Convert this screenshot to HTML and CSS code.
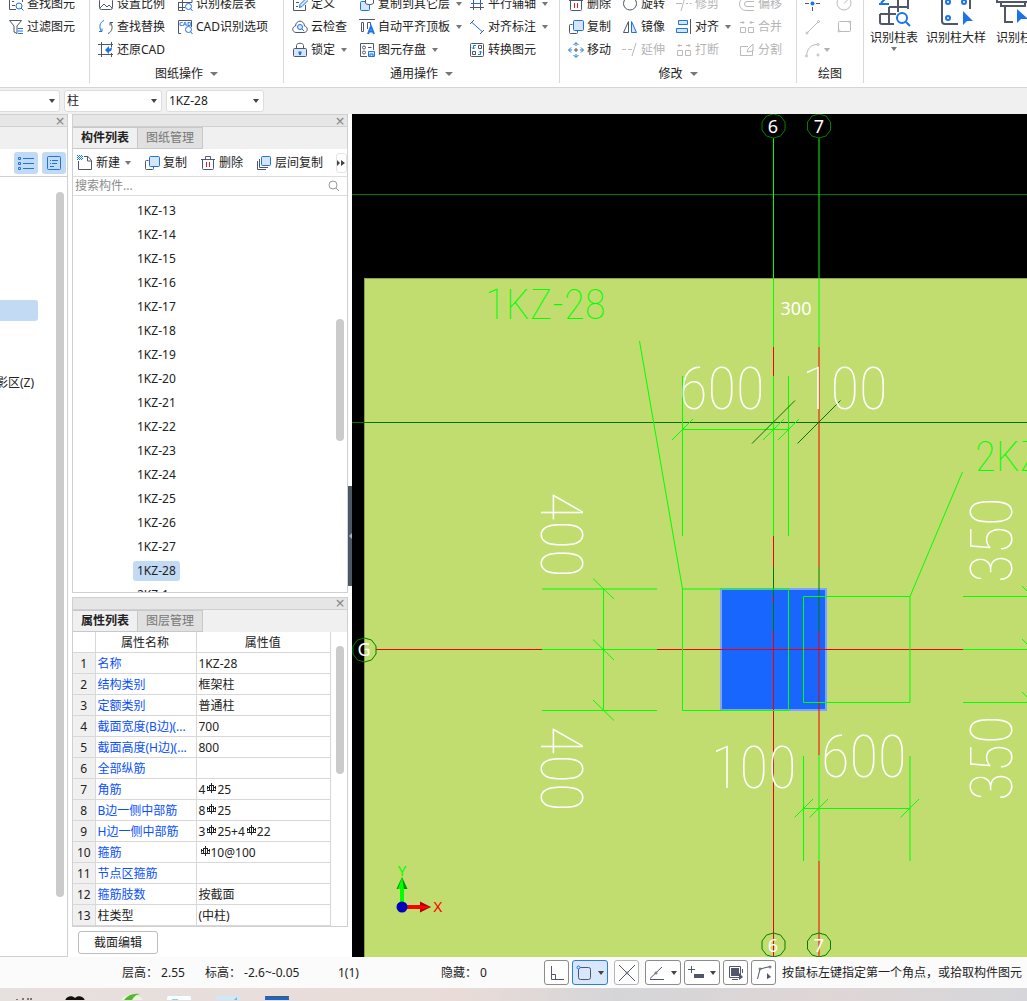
FILE: index.html
```html
<!DOCTYPE html>
<html lang="zh-CN">
  <head>
    <meta charset="UTF-8" />
    <meta name="viewport" content="width=device-width, initial-scale=1.0" />
    <title>柱 1KZ-28</title>
    <link rel="stylesheet" href="styles.css">
  </head>
  <body>
    <svg class="defs" aria-hidden="true">
      <symbol id="i-copy" viewBox="0 0 16 16"><path class="d" d="M4.500 5.500h-2a1 1 0 0 0-1 1v7a1 1 0 0 0 1 1h6a1 1 0 0 0 1-1v-2"/><rect class="b f" x="5.500" y="1.500" width="10" height="10" rx="1"/></symbol>
      <symbol id="i-trash" viewBox="0 0 16 16"><path class="d" d="M1 4.500h14M5.500 4V1.500h5V4M2.500 4.500v9a1 1 0 0 0 1 1h9a1 1 0 0 0 1-1v-9"/><path class="r" d="M6.500 7v5M9.500 7v5"/></symbol>
      <symbol id="i-find" viewBox="0 0 16 16"><path class="d" d="M14.500 6V1.500h-13v12H8M4 5.500h2M4 9.500h3"/><circle class="b" cx="11" cy="10" r="3"/><path class="b" d="M13 12l2.500 2.500"/></symbol>
      <symbol id="i-bar" viewBox="0 0 10 10"><path class="k" d="M5.500 0v10M3.500 2v6M7.500 2v6M1 7.500h9M3 2.500h5M1.500 3v3.500M3 4.500H1.500M9.500 3v3.500M8 4.500h1.500"/></symbol>
    </svg>

    <header class="ribbon">
      <section class="group group-find">
        <div class="cells">
          <button class="cmd"><svg class="ico"><use href="#i-find"/></svg>查找图元</button>
          <button class="cmd"><svg class="ico" viewBox="0 0 16 16"><path class="d" d="M1.500 1.500h12L9 7v7.500L6 13V7z"/><path class="b" d="M10 9.500h5M10 12h5M10 14.500h5"/></svg>过滤图元</button>
        </div>
      </section>

      <section class="group group-sheet">
        <div class="cells">
          <button class="cmd"><svg class="ico" viewBox="0 0 16 16"><rect class="d" x="1.500" y="2.500" width="13" height="11" rx="2"/><path class="d" d="M2 12l4-4 3 3 2-2 3 3"/></svg>设置比例</button>
          <button class="cmd"><svg class="ico" viewBox="0 0 16 16"><path class="d" d="M1 1.500h14v5M1 6.500h14M1 11.500h7M5.500 1v14M1.500 6v8.500H8"/><circle class="b" cx="11.500" cy="10.500" r="3"/><path class="b" d="M13.500 12.500l2 2.500"/></svg>识别楼层表</button>
          <button class="cmd"><svg class="ico" viewBox="0 0 16 16"><path class="b" d="M6 1.500C2 3 .5 8 3.500 12.500M1 12.500h3v-3"/><path class="d" d="M10 14.500c4-1.500 5.500-6.500 2.500-11M15 3.500h-3v3"/></svg>查找替换</button>
          <button class="cmd"><svg class="ico" viewBox="0 0 16 16"><path class="d" d="M4 14.500H1.500v-13h13V8"/><text class="cad-mark" x="2" y="7">CAD</text><circle class="b" cx="11.500" cy="10.500" r="3"/><path class="b" d="M13.500 12.500l2 2.500"/></svg>CAD识别选项</button>
          <button class="cmd"><svg class="ico" viewBox="0 0 16 16"><path class="d" d="M0 2.500h15M0 12.500h15M3.500 0v15M13.500 0v5M13.500 11v4"/><path class="bf" d="M7 8l4-4v2.500c2 0 2-.5 3-2 0 4-1 5-3 5V12z"/></svg>还原CAD</button>
        </div>
        <button class="caption">图纸操作<i class="tri"></i></button>
      </section>

      <section class="group group-common">
        <div class="cells">
          <button class="cmd"><svg class="ico" viewBox="0 0 16 16"><path class="d" d="M11 2.500H1.500v12h12V9M4 6.500h3M4 10.500h2"/><path class="b f" d="M7.500 11.500l.5-3 6-6 2 2-6 6z"/></svg>定义</button>
          <button class="cmd"><svg class="ico" viewBox="0 0 16 16"><rect class="b f" x="1.500" y="5.500" width="9" height="9" rx="1"/><path class="d w" d="M6.500 1v6c0 2 8 2 8 0V1"/></svg>复制到其它层<i class="tri"></i></button>
          <button class="cmd"><svg class="ico" viewBox="0 0 16 16"><path class="d" d="M1 3.500h14M1 11.500h14M4.500 1v13M11.500 1v13"/><path class="b" d="M2 7.500h12"/></svg>平行辅轴<i class="tri"></i></button>
          <button class="cmd"><svg class="ico" viewBox="0 0 16 16"><path class="d" d="M4 13.500C-.5 13 0 7.500 3.500 7 4 .5 12 .5 12.500 7c3.500.5 4 6-.5 6.500z"/><circle class="b f" cx="8" cy="8" r="2.500"/><path class="b" d="M10 10l2 2"/></svg>云检查</button>
          <button class="cmd"><svg class="ico" viewBox="0 0 16 16"><path class="d" d="M0 .5h16M2.500 3.500h2v9h-2zM8.500 10V3.500h3v3"/><path class="b b2" d="M9 15l3-7.500 3 7.500M10 12.500h4"/></svg>自动平齐顶板<i class="tri"></i></button>
          <button class="cmd"><svg class="ico" viewBox="0 0 16 16"><path class="b" d="M3 3.500l10 9"/><path class="d" d="M1 5l4-4M11 15l4-4"/></svg>对齐标注<i class="tri"></i></button>
          <button class="cmd"><svg class="ico" viewBox="0 0 16 16"><path class="d" d="M4.500 6V3.500c0-3 7-3 7 0V6"/><rect class="d f" x="1.500" y="6.500" width="13" height="8" rx="1"/><path class="b b2" d="M8 13V9.500M6.500 10.500h3"/></svg>锁定<i class="tri"></i></button>
          <button class="cmd"><svg class="ico" viewBox="0 0 16 16"><path class="d" d="M8 14.500H1.500v-13h13V8M9 5.500h3.500"/><circle class="d" cx="5" cy="5.500" r="1.500"/><circle class="d" cx="5" cy="10.500" r="1.500"/><path class="b f" d="M9.500 9.500h6v5h-6zM11 14v-2h3v2"/></svg>图元存盘<i class="tri"></i></button>
          <button class="cmd"><svg class="ico" viewBox="0 0 16 16"><rect class="d" x="1.500" y="1.500" width="13" height="13" rx="1"/><path class="d" d="M9.500 3.500h3v3h-3zM3.500 9.500h3v3h-3z"/><path class="b" d="M7 3.500H4.500V7M3 5.500L4.500 7 6 5.500M9 12.500h2.500V9M10 10.500L11.500 9l1.500 1.500"/></svg>转换图元</button>
        </div>
        <button class="caption">通用操作<i class="tri"></i></button>
      </section>

      <section class="group group-edit">
        <div class="cells">
          <button class="cmd"><svg class="ico"><use href="#i-trash"/></svg>删除</button>
          <button class="cmd"><svg class="ico" viewBox="0 0 16 16"><circle class="d" cx="8" cy="7.500" r="6.500"/></svg>旋转</button>
          <button class="cmd" disabled><svg class="ico" viewBox="0 0 16 16"><path class="d" d="M0 7.500h6M10 7.500h2M13.500 7.500h2M9 1L5 15"/></svg>修剪</button>
          <button class="cmd" disabled><svg class="ico" viewBox="0 0 16 16"><path class="d" d="M15 1.500H7a6 6 0 0 0 0 13h8M15 5.500H8a2.500 2.500 0 0 0 0 5h7"/></svg>偏移</button>
          <button class="cmd"><svg class="ico"><use href="#i-copy"/></svg>复制</button>
          <button class="cmd"><svg class="ico" viewBox="0 0 16 16"><path class="d" d="M6.500 2.500v11h-5z"/><path class="b f" d="M9.500 2.500v11h5z"/></svg>镜像</button>
          <button class="cmd"><svg class="ico" viewBox="0 0 16 16"><path class="b f" d="M2.500 1.500h9v4h-9zM.5 9.500h11v4H.5z"/><path class="d" d="M14.500 0v15"/></svg>对齐<i class="tri"></i></button>
          <button class="cmd" disabled><svg class="ico" viewBox="0 0 16 16"><path class="d" d="M1.500 8.500h5v5h-5zM9.500 8.500h5v5h-5zM1 3.500h4M3.500 2L5 3.500 3.500 5M15 3.500h-4M12.500 2L11 3.500 12.500 5"/></svg>合并</button>
          <button class="cmd"><svg class="ico" viewBox="0 0 16 16"><path class="b" d="M5.500 3L8 .5 10.500 3M5.500 13L8 15.500l2.500-2.500M3 5.500L.5 8 3 10.500M13 5.500L15.500 8 13 10.500M8 1v3M8 12v3M1 8h3M12 8h3"/><path class="d" d="M6 8h4M8 6v4"/></svg>移动</button>
          <button class="cmd" disabled><svg class="ico" viewBox="0 0 16 16"><path class="d" d="M0 7.500h4M6 7.500h4M14 1l-4 13"/></svg>延伸</button>
          <button class="cmd" disabled><svg class="ico" viewBox="0 0 16 16"><path class="d" d="M1.500 8.500h5v5h-5zM9.500 8.500h5v5h-5zM2 3.500h4M3.500 2L2 3.500 3.500 5M10 3.500h4M12.500 2L14 3.500 12.500 5"/></svg>打断</button>
          <button class="cmd" disabled><svg class="ico" viewBox="0 0 16 16"><path class="d" d="M9 4.500H1.500v9h12V8M8 10l1-3 5-5v7z"/></svg>分割</button>
        </div>
        <button class="caption">修改<i class="tri"></i></button>
      </section>

      <section class="group group-draw">
        <div class="cells">
          <button class="cmd" aria-label="点"><svg class="ico" viewBox="0 0 16 16"><circle class="bf" cx="7.500" cy="7.500" r="2"/><path class="d" d="M0 7.500h4M11 7.500h4M7.500 11v4M7.500 0v4"/></svg></button>
          <button class="cmd" disabled aria-label="圆"><svg class="ico" viewBox="0 0 16 16"><circle class="d" cx="8" cy="7" r="7"/><path class="d" d="M8 7.500l4-4"/></svg></button>
          <button class="cmd" disabled aria-label="直线"><svg class="ico" viewBox="0 0 16 16"><path class="d" d="M2 14L13 3"/><circle class="d w" cx="2" cy="14" r="1"/><circle class="d w" cx="13.500" cy="2.500" r="1"/></svg></button>
          <button class="cmd" disabled aria-label="矩形"><svg class="ico" viewBox="0 0 16 16"><rect class="d" x="2.500" y="2.500" width="12" height="10" rx="1"/><circle class="d w" cx="3" cy="12" r="1"/><circle class="d w" cx="14" cy="3" r="1"/></svg></button>
          <button class="cmd" disabled aria-label="弧"><svg class="ico" viewBox="0 0 16 16"><path class="d" d="M1.500 14C2 7 6 2.500 12 2.500"/><circle class="d w" cx="1.500" cy="14" r="1"/><circle class="d w" cx="13" cy="2.500" r="1"/><circle class="d w" cx="13" cy="13" r="1"/></svg><i class="tri"></i></button>
        </div>
        <span class="caption">绘图</span>
      </section>

      <section class="group group-detect">
        <button class="big"><svg class="ico-big" viewBox="0 0 32 32"><path class="d b2" d="M2 20v8a2 2 0 0 0 2 2h12M2 20h16M11 13v17M20 4v14M30 3v12M11 13h19"/><path class="b b2" d="M1 10h10M3 9l6-6"/><circle class="b b2" cx="24" cy="24" r="5"/><path class="b b2" d="M28 28l4 4"/></svg>识别柱表<i class="tri"></i></button>
        <button class="big"><svg class="ico-big" viewBox="0 0 32 32"><path class="d b2" d="M18 30H5a3 3 0 0 1-3-3V0M30 0v15"/><circle class="b b2" cx="8" cy="8" r="2"/><circle class="b b2" cx="24" cy="8" r="2"/><circle class="b b2" cx="8" cy="24" r="2"/><path class="bf" d="M23 17v14l4-4h6z"/></svg>识别柱大样</button>
        <button class="big"><svg class="ico-big" viewBox="0 0 32 32"><path class="d b2" d="M1 2v6h4v4h24V8h4V2M5 8h24M9 12v16h8"/><path class="bf" d="M21 15v14l4-4h7z"/></svg>识别柱原位标注</button>
      </section>
    </header>

    <nav class="context">
      <label class="pick"><select aria-label="楼层"><option></option></select></label>
      <label class="pick"><select aria-label="构件类型"><option>柱</option></select></label>
      <label class="pick"><select aria-label="构件"><option>1KZ-28</option></select></label>
    </nav>

    <main class="work">
      <aside class="panel nav-panel">
        <div class="titlebar"><button class="close" aria-label="关闭">×</button></div>
        <div class="tabs"></div>
        <div class="nav-tools">
          <button class="toggle" aria-label="列表"><svg class="ico" viewBox="0 0 16 16"><path class="b" d="M5 3.500h11M5 8.500h11M5 13.500h11M.5 2.500h2v2h-2zM.5 7.500h2v2h-2zM.5 12.500h2v2h-2z"/></svg></button>
          <button class="toggle" aria-label="详情"><svg class="ico" viewBox="0 0 16 16"><rect class="b" x="1.500" y="1.500" width="13" height="13" rx="1"/><path class="b" d="M4 5.500h1M6 5.500h6M4 8.500h1M6 8.500h5M4 11.500h4"/></svg></button>
        </div>
        <div class="nav-body">
          <div class="nav-tree">
            <span class="nav-current"></span>
            <span class="nav-item">影区(Z)</span>
          </div>
          <div class="scroll"><i class="thumb"></i></div>
        </div>
      </aside>

      <div class="middle">
        <section class="panel list-panel">
          <div class="titlebar"><button class="close" aria-label="关闭">×</button></div>
          <div class="tabs">
            <button class="tab active">构件列表</button>
            <button class="tab">图纸管理</button>
          </div>
          <div class="toolbar">
            <button class="cmd"><svg class="ico" viewBox="0 0 16 16"><path class="d" d="M1.500 6v8.500h13V5.500L11 1.500H7M10.500 2v4h4"/><path class="b dots" d="M0 .5h5M1 1.500h5M0 2.500h5M1 3.500h5M0 4.500h5"/></svg>新建<i class="tri"></i></button>
            <button class="cmd"><svg class="ico"><use href="#i-copy"/></svg>复制</button>
            <button class="cmd"><svg class="ico"><use href="#i-trash"/></svg>删除</button>
            <button class="cmd"><svg class="ico" viewBox="0 0 16 16"><path class="d" d="M1.500 6v8.500H10M3.500 4v8.500H12"/><rect class="b f" x="5.500" y="1.500" width="9" height="9" rx="1"/></svg>层间复制</button>
            <button class="more" aria-label="更多"><svg viewBox="0 0 8 6"><path d="M0 0l3 3-3 3zM4 0l4 3-4 3z"/></svg></button>
          </div>
          <div class="search">
            <input type="text" placeholder="搜索构件..." aria-label="搜索构件" />
            <svg class="lens" viewBox="0 0 12 12"><circle cx="5" cy="5" r="4"/><path d="M8 8l3 3"/></svg>
          </div>
          <div class="list-body">
            <ul class="items">
              <li><span>1KZ-13</span></li>
              <li><span>1KZ-14</span></li>
              <li><span>1KZ-15</span></li>
              <li><span>1KZ-16</span></li>
              <li><span>1KZ-17</span></li>
              <li><span>1KZ-18</span></li>
              <li><span>1KZ-19</span></li>
              <li><span>1KZ-20</span></li>
              <li><span>1KZ-21</span></li>
              <li><span>1KZ-22</span></li>
              <li><span>1KZ-23</span></li>
              <li><span>1KZ-24</span></li>
              <li><span>1KZ-25</span></li>
              <li><span>1KZ-26</span></li>
              <li><span>1KZ-27</span></li>
              <li class="selected"><span>1KZ-28</span></li>
              <li><span>2KZ-1</span></li>
            </ul>
            <div class="scroll"><i class="thumb"></i></div>
          </div>
        </section>

        <section class="panel prop-panel">
          <div class="titlebar"><button class="close" aria-label="关闭">×</button></div>
          <div class="tabs">
            <button class="tab active">属性列表</button>
            <button class="tab">图层管理</button>
          </div>
          <div class="prop-body">
            <table class="props">
              <thead>
                <tr><th></th><th>属性名称</th><th>属性值</th></tr>
              </thead>
              <tbody>
                <tr><th>1</th><td>名称</td><td>1KZ-28</td></tr>
                <tr><th>2</th><td>结构类别</td><td>框架柱</td></tr>
                <tr><th>3</th><td>定额类别</td><td>普通柱</td></tr>
                <tr><th>4</th><td>截面宽度(B边)(...</td><td>700</td></tr>
                <tr><th>5</th><td>截面高度(H边)(...</td><td>800</td></tr>
                <tr><th>6</th><td>全部纵筋</td><td></td></tr>
                <tr><th>7</th><td>角筋</td><td>4<svg class="bar"><use href="#i-bar"/></svg>25</td></tr>
                <tr><th>8</th><td>B边一侧中部筋</td><td>8<svg class="bar"><use href="#i-bar"/></svg>25</td></tr>
                <tr><th>9</th><td>H边一侧中部筋</td><td>3<svg class="bar"><use href="#i-bar"/></svg>25+4<svg class="bar"><use href="#i-bar"/></svg>22</td></tr>
                <tr><th>10</th><td>箍筋</td><td><svg class="bar"><use href="#i-bar"/></svg>10@100</td></tr>
                <tr><th>11</th><td>节点区箍筋</td><td></td></tr>
                <tr><th>12</th><td>箍筋肢数</td><td>按截面</td></tr>
                <tr><th>13</th><td class="plain">柱类型</td><td>(中柱)</td></tr>
              </tbody>
            </table>
            <div class="scroll"><i class="thumb"></i></div>
          </div>
        </section>
        <div class="section-edit"><button>截面编辑</button></div>
      </div>

      <div class="splitter"><button aria-label="折叠"><svg viewBox="0 0 4 6"><path d="M4 0L1 3l3 3z"/></svg></button></div>

      <div class="canvas">
        <svg class="drawing" role="img" aria-label="柱平面图">
          <!-- model coordinates start at the window corner -->
          <g transform="translate(-352 -114)">
            <rect class="slab" x="364.500" y="278.500" width="3000" height="3000"/>

            <!-- grid -->
            <path class="grid" d="M352 194.500H3000M352 422.500H3000"/>
            <path class="green" d="M773.500 138V347M773.500 376V536M819 138V347M819 755V861"/>

            <rect class="column" x="721" y="589" width="105" height="121"/>

            <path class="red" d="M773.500 347V376M773.500 536V567M773.500 597V602M773.500 631V957M819 347V567M819 631V755M819 861V957"/>
            <path class="grid" d="M773.500 567V597M773.500 602V631M819 567V631"/>
            <path class="red" d="M376 649.500H542M657 649.500H963"/>

            <!-- column outlines and leaders -->
            <path class="green" d="M682.500 589H788.500V710.500H682.500zM803.500 596.500H910V702.500H803.500zM639.500 341L682.500 589M962.500 472L910 596.500"/>

            <!-- dimension lines -->
            <path class="green" d="M682.500 376V536M788.500 376V536M682.500 429.500H788.500M672 440L693 419M763 440L784 419M778 440L799 419"/>
            <path class="green" d="M542 589H657M542 649.500H657M542 710.500H657M603.500 589V710.500M593 578.500L614 599M593 639.500L614 660M593 700L614 720.500"/>
            <path class="green" d="M963 596.500H1102M963 649.500H1102M963 702.500H1102M1032.500 596V702M1022 586L1043 607M1022 639L1043 660M1022 692L1043 713"/>
            <path class="green" d="M803.500 756V861M910 756V861M803.500 808.500H910M794.500 817.500L813 799M809.500 817.500L828 799M900.500 817.500L919 799"/>
            <path class="grid" d="M752 443.500L795 400.500M797.500 443.500L840.500 400.500"/>

            <!-- axis bubbles -->
            <g class="bubble">
              <path d="M773.500 114l7 2 4.500 6v8l-4.500 6-7 2-7-2-4.500-6v-8l4.500-6z"/>
              <path d="M819 114l7 2 4.500 6v8l-4.500 6-7 2-7-2-4.500-6v-8l4.500-6z"/>
              <path d="M773.500 933l7 2 4.500 6v8l-4.500 6-7 2-7-2-4.500-6v-8l4.500-6z"/>
              <path d="M819 933l7 2 4.500 6v8l-4.500 6-7 2-7-2-4.500-6v-8l4.500-6z"/>
              <path d="M364.500 638l7 2 4.500 6v8l-4.500 6-7 2-7-2-4.500-6v-8l4.500-6z"/>
            </g>
            <g class="axis-name">
              <text x="773" y="133">6</text>
              <text x="819" y="133">7</text>
              <text x="773" y="952">6</text>
              <text x="819" y="952">7</text>
              <text x="364" y="656">G</text>
              <text x="796" y="315">300</text>
            </g>

            <g class="cad-text">
              <text x="679" y="409">600</text>
              <text x="802" y="409">100</text>
              <text x="711" y="788">100</text>
              <text x="821" y="777">600</text>
              <text transform="translate(541 492) rotate(90)">400</text>
              <text transform="translate(541 726) rotate(90)">400</text>
              <text transform="translate(1012 583) rotate(-90)">350</text>
              <text transform="translate(1012 801) rotate(-90)">350</text>
            </g>
            <g class="cad-text name">
              <text x="485" y="319">1KZ-28</text>
              <text x="975" y="471">2KZ-4</text>
            </g>

            <!-- UCS mark -->
            <path fill="#0f0" d="M400 887h4v16h-4z"/><path fill="#090" d="M402 877l5.500 12h-11z"/><path fill="#0f0" d="M402 877l2 12h-6z"/>
            <path fill="#f00" d="M406 905h15v4h-15z"/><path fill="#a00" d="M431 907l-11-5.500v11z"/><path fill="#f00" d="M431 907l-11-2v5z"/>
            <circle fill="#00b" cx="402" cy="907" r="5.500"/>
            <text class="ucs ucs-y" x="402" y="876">Y</text>
            <text class="ucs ucs-x" x="438" y="912">X</text>
          </g>
        </svg>
      </div>
    </main>

    <footer class="status">
      <span class="st-floor">层高： 2.55</span>
      <span class="st-level">标高： -2.6~-0.05</span>
      <span class="st-count">1(1)</span>
      <span class="st-hidden">隐藏： 0</span>
      <div class="modes">
        <button aria-label="正交"><svg class="ico" viewBox="0 0 16 16"><path class="d" d="M2.500 1v13.500H15M2.500 9.500h4v5"/></svg></button>
        <button class="wide on" aria-label="矩形选择"><svg class="ico" viewBox="0 0 16 16"><rect class="d" x="2.500" y="2.500" width="12" height="12" rx="2"/><circle class="b f" cx="2.500" cy="2.500" r="1.500"/></svg><i class="tri"></i></button>
        <button class="dim" aria-label="交点"><svg class="ico" viewBox="0 0 16 16"><path class="d" d="M0 0l16 16M16 0L0 16"/><circle class="d w" cx="8" cy="8" r="1"/></svg></button>
        <button class="wide" aria-label="角度"><svg class="ico" viewBox="0 0 16 16"><path class="d" d="M1 13.500L13 2M1 14.500h14"/><circle class="d w" cx="7" cy="8" r="1"/></svg><i class="tri"></i></button>
        <button class="wide" aria-label="偏移"><svg class="ico" viewBox="0 0 16 16"><path class="d" d="M0 4.500h7M3.500 1v7"/><path class="df" d="M6 9h10v4H6z"/></svg><i class="tri"></i></button>
        <button aria-label="跨图层"><svg class="ico" viewBox="0 0 16 16"><path class="df" d="M3 3h8v8H3zM11 8l4 4-4 3z"/><path class="d" d="M1.500 1.500h11v11h-11zM14.500 4v4M4 14.500h6"/></svg></button>
        <button aria-label="折线"><svg class="ico" viewBox="0 0 16 16"><path class="d" d="M1.500 14L4 4l10-2.500"/><path class="df" d="M11 8l4 4-4 2z"/><circle class="d w" cx="4" cy="4" r="1"/><circle class="d w" cx="14" cy="2" r="1"/></svg></button>
      </div>
      <span class="hint">按鼠标左键指定第一个角点，或拾取构件图元</span>
    </footer>

    <div class="taskbar">
      <svg viewBox="0 0 300 12" width="300" height="12" aria-hidden="true">
        <path class="ink" d="M17 11v2M23 10v2M28 10v2M31 10v2"/>
        <path fill="#111" d="M65 13c1-5 7-6 10-3 3-3 9-2 10 3z"/>
        <path fill="#e8f8e0" d="M121 13c2-8 20-8 22 0z"/><path fill="#55b82c" d="M124 12c4-5 9-7 16-6-3 0-6 2-8 6z"/>
        <rect fill="#f8ffff" x="167" y="8" width="24" height="10" rx="2"/><path fill="#6ee0e8" d="M172 11h6v1h-6z"/>
        <rect fill="#cfe8fa" x="216" y="8" width="24" height="10" rx="2"/><path fill="#6db4ee" d="M234 12l3-3v3z"/>
        <rect fill="#1669c9" x="265" y="8" width="24" height="10" rx="2"/><path fill="#555" d="M265 8h24v1h-24z"/>
      </svg>
    </div>
  </body>
</html>
```
FILE: styles.css
```css
* {
  box-sizing: border-box;
}
body {
  margin: 0;
  height: 100vh;
  display: flex;
  flex-direction: column;
  overflow: hidden;
  background-color: #fff;
  color: #222;
  font-family: "Noto Sans", "Noto Sans CJK SC", sans-serif;
  font-size: 12px;
  line-height: 16px;
}
button,
input,
select {
  font: inherit;
  color: inherit;
  margin: 0;
  padding: 0;
  border: 0;
  background: none;
}
.defs {
  display: none;
}

/* icon strokes */
.ico {
  width: 16px;
  height: 16px;
  flex: none;
}
.ico-big {
  width: 32px;
  height: 32px;
  overflow: visible;
}
.d {
  fill: none;
  stroke: #50566b;
}
.b {
  fill: none;
  stroke: #1a73e8;
}
.r {
  fill: none;
  stroke: #e02020;
}
.k {
  fill: none;
  stroke: #222;
}
.b2 {
  stroke-width: 2;
}
.f {
  fill: #d5e5fa;
}
.w {
  fill: #fff;
}
.bf {
  fill: #1a73e8;
}
.df {
  fill: #50566b;
}
.dots {
  stroke-dasharray: 1 1;
}
.cad-mark {
  fill: #1a73e8;
  font-size: 6px;
  font-weight: bold;
}
.tri {
  flex: none;
  width: 0;
  height: 0;
  border: 3px solid transparent;
  border-top: 4px solid #777;
  border-bottom: 0;
}

/* ribbon, scrolled so that its first row is cut */
.ribbon {
  flex: none;
  display: flex;
  align-items: flex-end;
  height: 88px;
  padding-bottom: 4px;
  border-bottom: 1px solid #d5d5d5;
  overflow: hidden;
}
.group {
  flex: none;
  display: flex;
  flex-direction: column;
  height: 91px;
  border-right: 1px solid #d9d9d9;
}
.cells {
  display: grid;
  grid-auto-rows: 23px;
  height: 69px;
}
.cmd {
  display: flex;
  align-items: center;
  gap: 3px;
  white-space: nowrap;
  text-align: left;
}
.cmd .tri {
  margin-left: 3px;
}
.cmd:disabled {
  color: #b5b5b5;
}
.cmd:disabled .d {
  stroke: #b9b9b9;
}
.caption {
  display: flex;
  align-items: center;
  justify-content: center;
  gap: 7px;
  height: 22px;
  margin-left: -8px;
  padding-top: 4px;
}
.caption .tri {
  border-width: 4px;
  border-bottom-width: 0;
}
.group-find {
  width: 90px;
  padding-left: 8px;
}
.group-sheet {
  width: 194px;
  padding-left: 8px;
}
.group-sheet .cells {
  grid-template-columns: 79px auto;
}
.group-common {
  width: 276px;
  padding-left: 8px;
}
.group-common .cells {
  grid-template-columns: 67px 110px auto;
}
.group-edit {
  width: 237px;
  padding-left: 8px;
}
.group-edit .cells {
  grid-template-columns: 54px 54px 63px auto;
}
.group-draw {
  width: 67px;
  padding-left: 8px;
}
.group-draw .cells {
  grid-template-columns: 31px auto;
}
.group-draw .tri {
  margin-left: 0;
}
.group-draw .cmd:disabled .tri {
  border-top-color: #b0b0b0;
}
.group-detect {
  flex-direction: row;
  align-items: flex-start;
  gap: 6px;
  padding: 2px 0 0 5px;
  border-right: 0;
}
.big {
  display: flex;
  flex-direction: column;
  align-items: center;
  white-space: nowrap;
  gap: 4px;
  padding: 0 1px;
}
.big:last-child {
  align-items: flex-start;
  padding-left: 3px;
}
.big .tri {
  margin-top: -3px;
}

/* floor / type / member pickers */
.context {
  flex: none;
  display: flex;
  gap: 4px;
  height: 26px;
  padding: 2px 0;
  background-color: #f0f0f0;
}
.pick {
  position: relative;
  width: 98px;
}
.pick:first-child {
  width: 60px;
}
.pick select {
  appearance: none;
  width: 100%;
  height: 22px;
  padding: 0 2px;
  border: 1px solid #ddd;
  border-radius: 3px;
  background-color: #fff;
}
.pick:first-child select {
  border-left: 0;
  border-radius: 0 3px 3px 0;
}
.pick::after {
  content: "";
  position: absolute;
  right: 5px;
  top: 9px;
  border: 3px solid transparent;
  border-top: 4px solid #444;
  border-bottom: 0;
}

/* panels */
.work {
  flex: 1;
  display: flex;
  min-height: 0;
}
.panel {
  display: flex;
  flex-direction: column;
  border: 1px solid #d0d0d0;
  background-color: #fff;
  min-height: 0;
}
.titlebar {
  flex: none;
  display: flex;
  justify-content: flex-end;
  align-items: center;
  height: 12px;
  padding-right: 2px;
  border-bottom: 1px solid #d0d0d0;
  background-color: #e6e6e6;
}
.close {
  width: 10px;
  color: #888;
  font-size: 16px;
  line-height: 10px;
}
.tabs {
  flex: none;
  display: flex;
  height: 22px;
  background-color: #f0f0f0;
}
.tab {
  width: 65px;
  border: 1px solid #c6c8cc;
  border-left: 0;
  background-color: #e0e0e0;
  color: #777;
}
.tab.active {
  background-color: #f0f0f0;
  color: #222;
  font-weight: bold;
}
.scroll {
  flex: none;
  width: 16px;
  padding-left: 5px;
}
.thumb {
  display: block;
  width: 8px;
  border-radius: 4px;
  background-color: #cbcbcb;
}

.nav-panel {
  width: 68px;
  border-left: 0;
}
.nav-tools {
  flex: none;
  display: flex;
  justify-content: flex-end;
  align-items: center;
  gap: 4px;
  height: 28px;
  padding-right: 1px;
  border-bottom: 1px solid #d0d0d0;
}
.toggle {
  display: flex;
  align-items: center;
  justify-content: center;
  width: 24px;
  height: 22px;
  border-radius: 3px;
  background-color: #c2daf4;
}
.nav-body {
  flex: 1;
  display: flex;
}
.nav-tree {
  flex: 1;
  overflow: hidden;
  padding-top: 123px;
  display: flex;
  flex-direction: column;
  align-items: flex-start;
  gap: 54px;
}
.nav-current {
  width: 38px;
  height: 21px;
  border-radius: 0 3px 3px 0;
  background-color: #c2daf4;
}
.nav-item {
  white-space: nowrap;
  margin-left: -4px;
}
.nav-body .scroll {
  padding-top: 15px;
}
.nav-body .thumb {
  height: 705px;
}

.middle {
  flex: none;
  display: flex;
  flex-direction: column;
  width: 276px;
  margin-left: 4px;
}
.list-panel {
  flex: 1;
}
.toolbar {
  flex: none;
  display: flex;
  align-items: center;
  gap: 13px;
  height: 28px;
  padding: 1px 0 0 4px;
  border-bottom: 1px solid #ddd;
}
.toolbar .tri {
  margin-left: 2px;
}
.more {
  width: 11px;
  height: 20px;
  border: 1px solid #e4e4e4;
  border-radius: 3px;
  margin-left: auto;
}
.more svg {
  display: block;
  width: 8px;
  height: 6px;
  fill: #444;
}
.search {
  flex: none;
  display: flex;
  align-items: center;
  height: 19px;
  padding: 0 7px 0 2px;
  border-bottom: 1px solid #ddd;
}
.search input {
  flex: 1;
  min-width: 0;
  outline: 0;
}
.search input::placeholder {
  color: #8c8c8c;
}
.lens {
  width: 12px;
  height: 12px;
  fill: none;
  stroke: #999;
}
.list-body {
  flex: 1;
  display: flex;
  min-height: 0;
  overflow: hidden;
}
.items {
  flex: 1;
  margin: 0;
  padding: 3px 0 0 60px;
  list-style: none;
}
.items li {
  display: flex;
  align-items: center;
  height: 24px;
}
.items span {
  padding: 2px 4px;
  border-radius: 3px;
}
.items .selected span {
  background-color: #c2daf4;
}
.list-body .scroll {
  padding-top: 123px;
}
.list-body .thumb {
  height: 122px;
}

.prop-panel {
  flex: none;
  margin-top: 4px;
}
.prop-body {
  display: flex;
}
.props {
  flex: 1;
  table-layout: fixed;
  border-collapse: collapse;
}
.props tr {
  height: 21px;
}
.props th,
.props td {
  padding: 2px 3px 0 2px;
  border: 1px solid #d8d8d8;
  border-top: 0;
  line-height: 16px;
  font-weight: normal;
  text-align: left;
  white-space: nowrap;
}
.props th:first-child {
  width: 22px;
  padding: 2px 0 0;
  border-left: 0;
  text-align: center;
}
.props tbody th {
  background-color: #f0f0f0;
}
.props thead th {
  text-align: center;
}
.props thead th:nth-child(2) {
  width: 101px;
}
.props td:nth-child(2) {
  color: #0a50ff;
}
.props .plain:nth-child(2) {
  color: #222;
}
.bar {
  width: 10px;
  height: 10px;
  margin: 0 1px;
  vertical-align: 1px;
}
.prop-body .scroll {
  padding-top: 14px;
}
.prop-body .thumb {
  height: 128px;
}
.section-edit {
  flex: none;
  padding: 4px 6px 3px;
}
.section-edit button {
  display: block;
  width: 80px;
  height: 23px;
  border: 1px solid #bcbcbc;
  border-radius: 3px;
}

.splitter {
  flex: none;
  display: flex;
  align-items: center;
  width: 4px;
}
.splitter button {
  display: flex;
  align-items: center;
  width: 4px;
  height: 100px;
  background-color: #4b5966;
}
.splitter svg {
  width: 4px;
  height: 6px;
  fill: #a9b4be;
}

/* drawing area */
.canvas {
  flex: 1;
  min-width: 0;
  background-color: #000;
}
.drawing {
  display: block;
  width: 100%;
  height: 100%;
}
.slab {
  fill: #c1dc6f;
  stroke: #8f9f50;
}
.column {
  fill: #1966ff;
  stroke: #7da2ff;
  stroke-width: 2;
}
.green,
.grid,
.red {
  fill: none;
  stroke: #00ff00;
}
.grid {
  stroke: #007800;
}
.red {
  stroke: #f00000;
}
.bubble {
  fill: none;
  stroke: #008000;
}
.axis-name {
  fill: #fff;
  font-size: 18px;
  text-anchor: middle;
}
.cad-text {
  fill: #fff;
  font-family: "Roboto Condensed", "Lato", sans-serif;
  font-weight: 100;
  font-size: 59px;
}
.cad-text.name {
  fill: #00ff00;
  font-size: 43px;
}
.ucs {
  font-size: 15px;
  text-anchor: middle;
}
.ucs-x {
  fill: #f00;
}
.ucs-y {
  fill: #0f0;
}

/* status bar */
.status {
  flex: none;
  display: flex;
  align-items: center;
  height: 31px;
  padding-left: 122px;
  background-color: #fbfbfb;
  white-space: nowrap;
}
.status > * {
  flex: none;
}
.st-floor {
  width: 83px;
}
.st-level {
  width: 133px;
}
.st-count {
  width: 103px;
}
.st-hidden {
  width: 103px;
}
.modes {
  display: flex;
  gap: 3px;
  margin-right: 6px;
}
.modes button {
  display: flex;
  align-items: center;
  justify-content: center;
  gap: 6px;
  width: 25px;
  height: 25px;
  border: 1px solid #8c8c8c;
  border-radius: 3px;
  background-color: #fff;
}
.modes .wide {
  width: 36px;
}
.modes .tri {
  border-top-color: #444;
}
.modes .on {
  border-color: #2a7de1;
  background-color: #d8e7fb;
}
.modes .dim {
  margin: 0 3px;
  border-color: #b5b5b5;
}
.taskbar {
  flex: none;
  height: 13px;
  overflow: hidden;
  background: linear-gradient(90deg, #e6e0de, #e9dcd8 45%, #d5d5d8 60%, #dfd6d6 80%, #d6d6da);
}
.taskbar svg {
  display: block;
}
.ink {
  stroke: #111;
}
```
